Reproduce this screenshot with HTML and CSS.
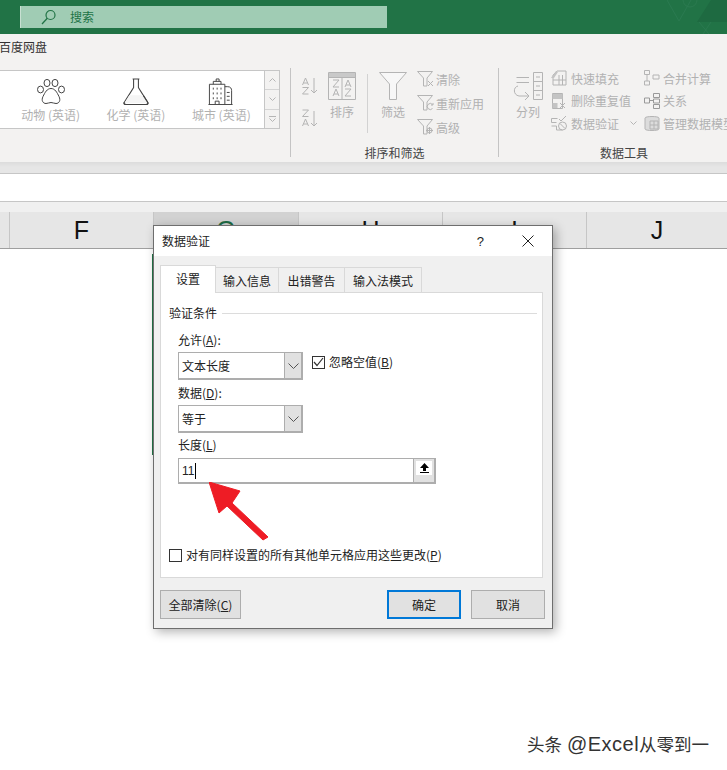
FILE: index.html
```html
<!DOCTYPE html>
<html lang="zh">
<head>
<meta charset="utf-8">
<title>数据验证</title>
<link rel="stylesheet" href="styles.css">
</head>
<body>
<div class="app">
  <header class="titlebar">
    <div class="search">
      <svg class="search-icon" width="16" height="16" viewBox="0 0 16 16"><circle cx="9.5" cy="6" r="4.5" fill="none" stroke="#217346" stroke-width="1.2"/><path d="M6.3 9.3 1 15" stroke="#217346" stroke-width="1.3"/></svg>
      <span class="search-text">搜索</span>
    </div>
    <svg class="deco" width="60" height="34" viewBox="0 0 60 34"><path d="M0 0 12 21 24 0" fill="none" stroke="#2b7a50" stroke-width="1"/><circle cx="23" cy="0" r="7" fill="none" stroke="#2b7a50"/><path d="M30 22 44 0 60 0 60 22Z" fill="#1e6a41"/><path d="M32 22 42 34M44 22 36 34" stroke="#2b7a50" fill="none"/></svg>
  </header>

  <section class="ribbon">
    <div class="tabs"><span class="tab-name">百度网盘</span></div>
    <div class="groups">
      <div class="gallery">
        <div class="gallery-items">
          <div class="gallery-item">
            <svg width="30" height="26" viewBox="0 0 30 26" fill="none" stroke="#444" stroke-width="1"><ellipse cx="4.5" cy="11" rx="3" ry="3.4"/><ellipse cx="11" cy="4.5" rx="3" ry="3.6"/><ellipse cx="19" cy="4.5" rx="3" ry="3.6"/><ellipse cx="25.5" cy="11" rx="3" ry="3.4"/><path d="M15 10c4 0 6 4 8 8 2 4 0 7-3 7-2 0-3-1-5-1s-3 1-5 1c-3 0-5-3-3-7 2-4 4-8 8-8Z"/></svg>
            <span class="gallery-label">动物 (英语)</span>
          </div>
          <div class="gallery-item">
            <svg width="30" height="28" viewBox="0 0 30 28" fill="none" stroke="#444" stroke-width="1.1"><path d="M11.5 1h7M12.5 1v9L3 25c-1 1.500 0 2.500 1.500 2.500h21c1.500 0 2.500-1 1.500-2.500L17.500 10V1"/><path d="M8 18h14l5 8H3Z" fill="#f5f5f5" stroke="none"/><path d="M3 25c-1 1.500 0 2.500 1.500 2.500h21c1.500 0 2.500-1 1.500-2.500L22.500 18"/></svg>
            <span class="gallery-label">化学 (英语)</span>
          </div>
          <div class="gallery-item">
            <svg width="26" height="28" viewBox="0 0 26 28" fill="none" stroke="#444" stroke-width="1"><path d="M1 27.500V6.500h16v21M5 6.500V3.500h8v3M8 3.500V1h3v2.500M0 27.500h25M17 9h3c3 0 4 2 4 4v14.500M5 10v2M9 10v2M13 10v2M5 15v2M9 15v2M13 15v2M5 20v2M9 20v2M13 20v2M19 15h3M19 19h3M19 23h3M7 27v-3h4v3"/></svg>
            <span class="gallery-label">城市 (英语)</span>
          </div>
        </div>
        <div class="scroller">
          <span class="scroll-btn"><svg width="7" height="4" viewBox="0 0 7 4"><path d="M.5 3.500 3.500.5l3 3" fill="none" stroke="#b5b5b5"/></svg></span>
          <span class="scroll-btn"><svg width="7" height="4" viewBox="0 0 7 4"><path d="M.5.500l3 3 3-3" fill="none" stroke="#b5b5b5"/></svg></span>
          <span class="scroll-btn"><svg width="7" height="6" viewBox="0 0 7 6"><path d="M0 .5h7M.5 2.500l3 3 3-3" fill="none" stroke="#b5b5b5"/></svg></span>
        </div>
      </div>

      <div class="group group-sort">
        <div class="group-body">
          <div class="sort-small">
            <svg width="18" height="18" viewBox="0 0 18 18" fill="none" stroke="#b4b4b4"><path d="M1.500 8 4.500 1l3 7M2.500 6h4M1.500 10.500h6l-6 6.500h6M13 1v15M10 13l3 3 3-3"/></svg>
            <svg width="18" height="18" viewBox="0 0 18 18" fill="none" stroke="#b4b4b4"><path d="M1.500 1h6l-6 6.500h6M1.500 17l3-7 3 7M2.500 15h4M13 2v15M10 14l3 3 3-3"/></svg>
          </div>
          <div class="big big-sort">
            <svg width="28" height="28" viewBox="0 0 28 28" fill="none" stroke="#b4b4b4"><path d="M.5.500h27v27H.5Z"/><path d="M.5 5.500h27M14 5.500v22" /><path d="M1 1h26v4H1Z" fill="#c9c9c9" stroke="none"/><path d="M5 8h6l-6 7h6M5 24l3-7 3 7M6 22h4M17 15l3-7 3 7M18 13h4M17 17h6l-6 7h6"/></svg>
            <span class="big-label">排序</span>
          </div>
          <div class="sep"></div>
          <div class="big big-filter">
            <svg width="28" height="28" viewBox="0 0 28 28" fill="#f7f7f7" stroke="#b4b4b4"><path d="M.5.500h27L17.500 12v15.500h-7V12Z"/></svg>
            <span class="big-label">筛选</span>
          </div>
          <div class="filter-list">
            <div class="small-row"><svg class="ico-16" width="17" height="16" viewBox="0 0 17 16" fill="none" stroke="#b4b4b4"><path d="M.5.500h15L10 7v8H6.500V7ZM11 10l5 5M16 10l-5 5"/></svg><span>清除</span></div>
            <div class="small-row"><svg class="ico-16" width="17" height="16" viewBox="0 0 17 16" fill="none" stroke="#b4b4b4"><path d="M.5.500h15L10 7v8H6.500V7ZM15.500 9.500a3 3 0 1 0 0 4M16 8v2h-2"/></svg><span>重新应用</span></div>
            <div class="small-row"><svg class="ico-16" width="17" height="16" viewBox="0 0 17 16" fill="none" stroke="#b4b4b4"><path d="M.5.500h15L10 7v8H6.500V7Z"/><circle cx="12.500" cy="11.500" r="2.500"/><path d="M12.500 8v7M9 11.500h7"/></svg><span>高级</span></div>
          </div>
        </div>
        <div class="group-label">排序和筛选</div>
      </div>

      <div class="group group-tools">
        <div class="group-body">
          <div class="big big-split">
            <svg width="30" height="28" viewBox="0 0 30 28" fill="none" stroke="#b4b4b4"><path d="M20.500.500h9v27h-9ZM20.500 9.500h9M20.500 18.500h9M23 5h4M23 14h4M23 23h4M3.500 5.500H16M3.500 10.500H16M5 14C0 15 0 23 6 24h9M12 20l4 4-4 4"/></svg>
            <span class="big-label">分列</span>
          </div>
          <div class="tool-col tool-col-a">
            <div class="small-row"><svg class="ico-tool" width="16" height="16" viewBox="0 0 16 16" fill="none" stroke="#b4b4b4"><path d="M2 15V5l4-4h9v14ZM2 10h13M8 5v10M11.500 5v10"/><path d="M0 8 5 1l2 1-4 6Z" fill="#c4c4c4" stroke="none"/></svg><span>快速填充</span></div>
            <div class="small-row"><svg class="ico-tool" width="16" height="16" viewBox="0 0 16 16" fill="none" stroke="#b4b4b4"><path d="M1.500.500h10v15h-10Z"/><path d="M1.500 1h10v5h-10ZM1.500 10h5v5h-5Z" fill="#c4c4c4" stroke="none"/><path d="M9 10l5 5M14 10l-5 5"/></svg><span>删除重复值</span></div>
            <div class="small-row"><svg class="ico-tool" width="16" height="16" viewBox="0 0 16 16" fill="none" stroke="#b4b4b4"><path d="M.5 3.500h6M.5 3.500v4h5M.5 11h5v4h6M8 4l2 2 5-5"/><circle cx="11.500" cy="11" r="4"/><path d="M9 8.500l5 5"/></svg><span>数据验证</span><svg class="chev" width="7" height="4" viewBox="0 0 7 4"><path d="M.5.500l3 3 3-3" fill="none" stroke="#b5b5b5"/></svg></div>
          </div>
          <div class="tool-col tool-col-b">
            <div class="small-row"><svg class="ico-tool" width="16" height="16" viewBox="0 0 16 16" fill="none" stroke="#b4b4b4"><path d="M.5.500h5v4h-5ZM.5 11h5v4h-5ZM9 5h6v4H9ZM3 4.500V11"/></svg><span>合并计算</span></div>
            <div class="small-row"><svg class="ico-tool" width="16" height="16" viewBox="0 0 16 16" fill="none" stroke="#999"><path d="M.5 5h5v5h-5ZM9.500.500h6v4h-6ZM9.500 6h6v4h-6ZM9.500 11.500h6v4h-6ZM5.500 7.500h4"/></svg><span>关系</span></div>
            <div class="small-row"><svg class="ico-tool" width="16" height="16" viewBox="0 0 16 16" fill="none" stroke="#b4b4b4"><path d="M1 3c0-2 14-2 14 0v11c0 2-14 2-14 0Z" fill="#dcdcdc"/><path d="M6 6h8v8H6ZM10 6v8M6 10h8"/></svg><span>管理数据模型</span></div>
          </div>
        </div>
        <div class="group-label">数据工具</div>
      </div>
    </div>
  </section>

  <div class="ribbon-shadow"></div>
  <div class="formula-bar"></div>

  <div class="col-headers">
    <div class="col col-stub"></div>
    <div class="col col-f">F</div>
    <div class="col col-g">G</div>
    <div class="col">H</div>
    <div class="col">I</div>
    <div class="col col-j">J</div>
  </div>
  <div class="sheet"></div>
</div>

<div class="cell-edge"></div>

<div class="dialog">
  <div class="dlg-title">
    <span class="dlg-name">数据验证</span>
    <span class="dlg-actions">
      <span class="dlg-help">?</span>
      <svg width="12" height="12" viewBox="0 0 12 12"><path d="M.5.500l11 11M11.500.500l-11 11" stroke="#222" stroke-width="1" fill="none"/></svg>
    </span>
  </div>
  <div class="dlg-tabs">
    <div class="dlg-tab active tab-1">设置</div>
    <div class="dlg-tab tab-2">输入信息</div>
    <div class="dlg-tab tab-3">出错警告</div>
    <div class="dlg-tab tab-4">输入法模式</div>
  </div>
  <div class="panel">
    <div class="legend"><span>验证条件</span><i class="legend-line"></i></div>
    <div class="field-label first">允许(<u>A</u>):</div>
    <div class="combo-row">
      <div class="combo"><span class="combo-value">文本长度</span><span class="combo-btn"><svg width="11" height="6" viewBox="0 0 11 6"><path d="M.5.500l5 5 5-5" fill="none" stroke="#555"/></svg></span></div>
      <label class="check check-blank">
        <span class="box"><svg width="11" height="10" viewBox="0 0 11 10"><path d="M1 5l3 3.500L10 1" fill="none" stroke="#333" stroke-width="1.200"/></svg></span>
        <span>忽略空值(<u>B</u>)</span>
      </label>
    </div>
    <div class="field-label">数据(<u>D</u>):</div>
    <div class="combo-row">
      <div class="combo"><span class="combo-value">等于</span><span class="combo-btn"><svg width="11" height="6" viewBox="0 0 11 6"><path d="M.5.500l5 5 5-5" fill="none" stroke="#555"/></svg></span></div>
    </div>
    <div class="field-label tight">长度(<u>L</u>)</div>
    <div class="input">
      <span class="input-value">11</span><i class="caret"></i>
      <span class="ref-btn"><span class="ref-inner"><svg width="9" height="10" viewBox="0 0 9 10"><path d="M4.500 0 9 5H6v3H3V5H0Z M0 9h9v1H0Z" fill="#000"/></svg></span></span>
    </div>
    <label class="check check-apply">
      <span class="box"></span>
      <span>对有同样设置的所有其他单元格应用这些更改(<u>P</u>)</span>
    </label>
  </div>
  <div class="dlg-buttons">
    <button class="btn btn-clear">全部清除(<u>C</u>)</button>
    <span class="btn-right">
      <button class="btn btn-ok">确定</button>
      <button class="btn btn-cancel">取消</button>
    </span>
  </div>
  <svg class="arrow" width="64" height="62" viewBox="0 0 64 62"><path d="M0 0 31 9 23 21 59 55 54 58 18 24 10 31Z" fill="#ee1c25" stroke="#ee1c25" stroke-width="1" stroke-linejoin="round"/></svg>
</div>

<div class="watermark">头条 <span class="wm-latin">@Excel</span>从零到一</div>
</body>
</html>
```
FILE: styles.css
```css
* { box-sizing: border-box; }
html, body { margin: 0; padding: 0; width: 727px; height: 770px; overflow: hidden; background: #fff; }
body { font-family: "Noto Sans CJK SC", "Liberation Sans", sans-serif; font-size: 12px; color: #222; position: relative; }
svg { display: block; flex: none; }
.app { display: flex; flex-direction: column; height: 770px; overflow: hidden; }

.titlebar { height: 34px; background: #217346; display: flex; justify-content: space-between; align-items: flex-start; padding: 6px 0 0 20px; flex: none; }
.search { width: 367px; height: 22px; background: #a0ccb4; display: flex; align-items: center; padding-left: 20px; border-left: 1px solid #c8e0d2; }
.search-text { color: #217346; font-size: 12px; margin-left: 13px; line-height: 22px; }
.deco { margin-top: -6px; }

.ribbon { height: 128px; background: #f3f2f1; flex: none; overflow: hidden; }
.tabs { height: 34px; padding: 4px 0 0 0; line-height: 18px; }
.tab-name { display: block; margin-left: -1px; color: #333; font-size: 12px; }
.groups { display: flex; align-items: flex-start; width: 780px; }

.gallery { width: 280px; height: 59px; margin-top: 2px; margin-right: 10px; background: #fff; border: 1px solid #c6c6c6; border-left: 0; display: flex; flex: none; }
.gallery-items { display: flex; width: 264px; padding-left: 8px; }
.gallery-item { width: 85.500px; display: flex; flex-direction: column; align-items: center; padding-top: 7px; height: 57px; }
.gallery-item svg { height: 27px; }
.gallery-label { color: #b1b1b1; font-size: 12px; line-height: 16px; white-space: nowrap; margin-top: 2px; }
.scroller { width: 15px; display: flex; flex-direction: column; border-left: 1px solid #c6c6c6; background: #f3f2f1; }
.scroll-btn { flex: 1; display: flex; align-items: center; justify-content: center; border-bottom: 1px solid #d4d4d4; }
.scroll-btn:last-child { border-bottom: 0; }

.group { height: 89px; border-left: 1px solid #c4c4c4; display: flex; flex-direction: column; flex: none; }
.group-sort { width: 208px; }
.group-tools { width: 260px; }
.group-body { height: 77px; flex: none; display: flex; align-items: flex-start; padding-top: 4px; }
.group-label { color: #444; text-align: center; line-height: 16px; margin-top: 0; }
.group-tools .group-label { width: 250px; }

.sort-small { margin: 5px 0 0 10px; width: 27px; display: flex; flex-direction: column; gap: 14px; }
.big { display: flex; flex-direction: column; align-items: center; }
.big-label { color: #b1b1b1; line-height: 16px; margin-top: 4px; }
.big-sort { width: 28px; }
.sep { width: 1px; height: 59px; background: #d2d2d2; margin: 2px 11px 0 11px; }
.big-filter { width: 28px; }
.filter-list { margin: -5px 0 0 10px; display: flex; flex-direction: column; }
.small-row { height: 24px; display: flex; align-items: center; color: #b1b1b1; white-space: nowrap; }
.ico-16 { margin-right: 2px; }
.big-split { width: 30px; margin-left: 14px; }
.tool-col { display: flex; flex-direction: column; margin-top: -5px; }
.tool-col .small-row { height: 22.500px; }
.tool-col-a { margin-left: 8px; width: 93px; }
.ico-tool { margin-right: 3px; }
.tool-col-a .ico-tool { margin-right: 4px; }
.chev { margin-left: 11px; }

.ribbon-shadow { height: 11px; flex: none; background: linear-gradient(#dcdcdc, #e6e6e6 5px); }
.formula-bar { height: 29px; flex: none; background: #fff; border-top: 1px solid #c6c6c6; border-bottom: 1px solid #c6c6c6; }

.col-headers { height: 47px; flex: none; display: flex; background: #e6e6e6; padding-top: 10px; border-bottom: 1px solid #9f9f9f; box-shadow: inset 0 10px 0 #f0f0f0; }
.col { width: 144px; border-left: 1px solid #c6c6c6; font-family: "Liberation Sans", sans-serif; font-size: 25px; line-height: 36px; text-align: center; color: #111; flex: none; }
.col-stub { width: 9px; border-left: 0; }
.col-f { width: 144px; }
.col-g { width: 145px; background: #d2d2d2; color: #1e6b45; }
.col-j { width: 141px; }
.sheet { flex: 1; background: #fff; }

.cell-edge { position: absolute; left: 152px; top: 254px; width: 2px; height: 201px; background: #217346; }

.dialog { position: absolute; left: 153px; top: 225px; width: 400px; height: 404px; background: #f0f0f0; border: 1px solid #6e6e6e; box-shadow: 3px 3px 10px rgba(0,0,0,.3); }
.dlg-title { height: 30px; background: #fff; display: flex; justify-content: space-between; align-items: center; padding: 0 18px 0 8px; color: #222; }
.dlg-name { margin-top: -2px; }
.dlg-actions { display: flex; align-items: center; gap: 38px; }
.dlg-help { font-family: "Liberation Sans", sans-serif; font-size: 13px; }
.dlg-tabs { display: flex; align-items: flex-end; height: 36px; padding-left: 6px; position: relative; z-index: 1; }
.dlg-tab { height: 25px; border: 1px solid #d9d9d9; border-bottom: 0; border-left: 0; display: flex; align-items: center; justify-content: center; background: #f0f0f0; color: #222; padding-top: 1px; }
.dlg-tab.active { height: 28px; background: #fff; border-left: 1px solid #d9d9d9; margin-bottom: -1px; padding-top: 0; padding-bottom: 2px; }
.tab-1 { width: 56px; }
.tab-2 { width: 63px; }
.tab-3 { width: 66px; }
.tab-4 { width: 77px; }

.panel { margin-left: 6px; width: 383px; height: 286px; background: #fff; border: 1px solid #d9d9d9; padding: 12px 5px 0 8px; }
.legend { display: flex; align-items: center; height: 16px; line-height: 16px; color: #222; }
.legend-line { flex: 1; height: 1px; background: #dcdcdc; margin-left: 5px; }
.field-label { margin: 5px 0 4px 9px; height: 16px; line-height: 16px; color: #222; }
.field-label.first { margin-top: 11px; }
.field-label.tight { margin-bottom: 5px; margin-top: 4px; }
.combo-row { display: flex; align-items: flex-start; margin-left: 9px; }
.combo { width: 125px; height: 28px; border: 1px solid #adadad; border-right-width: 2px; border-bottom-width: 2px; background: #fff; display: flex; justify-content: space-between; }
.combo-value { padding-left: 3px; line-height: 26px; color: #222; }
.combo-btn { width: 17px; background: #e1e1e1; border-left: 1px solid #adadad; display: flex; align-items: center; justify-content: center; }
.check { display: flex; align-items: center; gap: 4px; color: #222; line-height: 16px; }
.check-blank { margin: 2px 0 0 9px; }
.box { width: 13px; height: 13px; border: 1px solid #333; background: #fff; display: flex; align-items: center; justify-content: center; flex: none; }

.input { margin-left: 9px; width: 258px; height: 26px; border: 1px solid #adadad; border-right-width: 2px; border-bottom-width: 2px; background: #fff; display: flex; align-items: center; padding-left: 3px; position: relative; }
.input-value { font-family: "Liberation Sans", sans-serif; font-size: 12px; color: #222; }
.caret { width: 1px; height: 16px; background: #000; margin-left: 1px; }
.ref-btn { margin-left: auto; width: 21px; height: 23px; background: #e1e1e1; border-left: 1px solid #adadad; display: flex; align-items: flex-start; justify-content: center; padding-top: 2px; }
.ref-inner { width: 16px; height: 14px; background: #fff; display: flex; align-items: center; justify-content: center; }
.check-apply { margin-top: 63px; }

.dlg-buttons { display: flex; justify-content: space-between; padding: 12px 7px 0 6px; }
.btn-right { display: flex; gap: 10px; }
.btn { height: 29px; background: #e1e1e1; border: 1px solid #adadad; font: inherit; color: #222; padding: 0; }
.btn-clear { width: 81px; }
.btn-ok, .btn-cancel { width: 74px; }
.btn-ok { border: 2px solid #0078d7; }

.arrow { position: absolute; left: 55px; top: 256px; }

.watermark { position: absolute; left: 527px; top: 732px; font-family: "Liberation Sans", "Noto Sans CJK SC", sans-serif; font-size: 17.500px; line-height: 24px; color: #333; white-space: nowrap; }
.wm-latin { font-size: 20px; letter-spacing: .5px; }
```
